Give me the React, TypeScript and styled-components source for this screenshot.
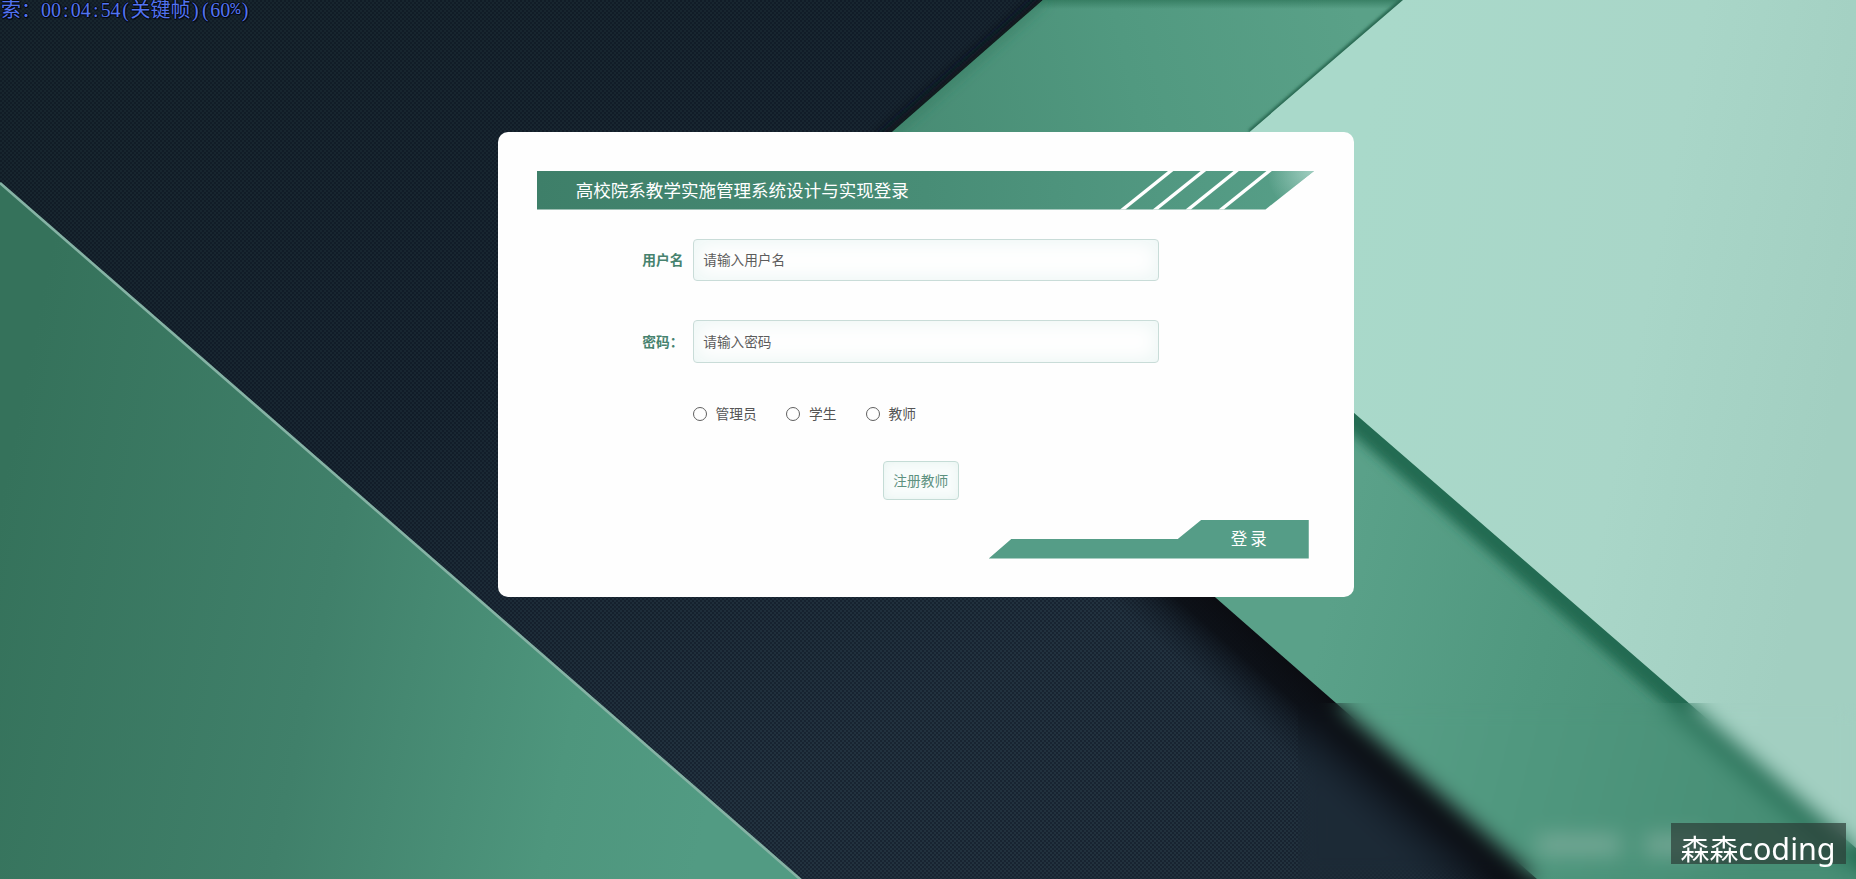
import React from "react";
import styled, { createGlobalStyle } from "styled-components";

const Global = createGlobalStyle`
  * { box-sizing: border-box; }
  body { margin: 0; overflow: hidden; background: #14212b; }
  input, button { font-family: inherit; }
`;

const Page = styled.div`
  position: relative;
  width: 1856px;
  height: 879px;
  overflow: hidden;
  display: flex;
  justify-content: center;
  align-items: flex-start;
  padding: 132px 4px 0 0;
  font-family: "Noto Sans CJK SC", "Liberation Sans", sans-serif;
`;

const Backdrop = styled.svg`
  position: absolute;
  inset: 0;
`;

const Haze = styled.div`
  position: absolute;
  left: 1298px;
  top: 703px;
  right: 0;
  bottom: 0;
  backdrop-filter: blur(10px);
`;

const Status = styled.div`
  position: absolute;
  left: 1px;
  top: 0;
  display: flex;
  height: 20px;
  line-height: 20px;
  font-size: 20px;
  color: #5273f0;
  text-shadow: 1px 0 0 #05080f, -1px 0 0 #05080f, 0 1px 0 #05080f, 0 -1px 0 #05080f, 1px 1px 1px #05080f;
`;

const Cell = styled.span<{ $wide?: boolean; $mono?: boolean }>`
  width: ${(p) => (p.$wide ? 20 : 9.95)}px;
  text-align: center;
  font-size: ${(p) => (p.$mono ? 17 : 20)}px;
  font-family: ${(p) =>
    p.$mono ? '"Liberation Mono", monospace' : '"Liberation Serif", "Noto Sans CJK SC", serif'};
`;

const Card = styled.form`
  position: relative;
  width: 855.5px;
  height: 465px;
  padding: 39px 39px 0;
  border-radius: 10px;
  background: #fefefe;
  display: flex;
  flex-direction: column;
`;

const Banner = styled.header`
  position: relative;
  width: 777px;
  height: 38.5px;
  flex: none;
  display: flex;
  align-items: center;
  padding-left: 38.5px;
`;

const BannerShape = styled.svg`
  position: absolute;
  inset: 0;
`;

const Title = styled.h1`
  position: relative;
  margin: 0;
  font-size: 17.55px;
  line-height: 38px;
  font-weight: 400;
  color: #fff;
  white-space: nowrap;
`;

const Field = styled.label<{ $top: number }>`
  display: flex;
  align-items: center;
  margin: ${(p) => p.$top}px 0 0 105px;
  height: 42.5px;
  flex: none;
`;

const FieldName = styled.span`
  width: 50.5px;
  font-size: 13.75px;
  line-height: 20px;
  padding-bottom: 1px;
  font-weight: 700;
  color: #46826e;
  white-space: nowrap;
`;

const Input = styled.input`
  width: 466.5px;
  height: 42.5px;
  padding: 0 9.5px 1px;
  border: 1px solid #c9dcd8;
  border-radius: 4px;
  outline: none;
  background: #fefefe;
  box-shadow: inset 0 0 20px #e9f5f3;
  font-size: 13.65px;
  color: #555;
  &::placeholder { color: #5c5c5c; opacity: 1; }
`;

const Roles = styled.div`
  display: flex;
  align-items: center;
  margin: 39px 0 0 155.5px;
  height: 24px;
  gap: 29.5px;
`;

const Role = styled.label`
  display: flex;
  align-items: center;
  gap: 8.7px;
  font-size: 13.75px;
  line-height: 24px;
  color: #555;
  white-space: nowrap;
`;

const RoleName = styled.span`
  padding-bottom: 2px;
  line-height: 22px;
`;

const Radio = styled.input`
  appearance: none;
  width: 14px;
  height: 14px;
  margin: 0;
  border: 1.2px solid #606060;
  border-radius: 50%;
`;

const Register = styled.button`
  margin: 35.5px 0 0 345.5px;
  width: 76px;
  height: 39px;
  flex: none;
  padding: 0 0 2px;
  border: 1px solid #c5dcd6;
  border-radius: 4px;
  background: #f8fcfb;
  box-shadow: inset 0 0 10px #e6f3f0;
  font-size: 13.75px;
  color: #5d917f;
  white-space: nowrap;
`;

const Submit = styled.button`
  margin: 19.5px 0 0 451.5px;
  width: 320px;
  height: 39px;
  flex: none;
  padding: 0 39px 3px 0;
  border: 0;
  background: #559d87;
  clip-path: polygon(0 100%, 22.5px 19.5px, 189px 19.5px, 213px 0, 100% 0, 100% 100%);
  text-align: right;
  font-size: 16.5px;
  letter-spacing: 3px;
  color: #fff;
`;

const Watermark = styled.div`
  position: absolute;
  left: 1671px;
  top: 823px;
  width: 175px;
  height: 41px;
  padding-left: 9.5px;
  background: rgba(42, 57, 51, 0.68);
  color: #fff;
  font-size: 28.9px;
  line-height: 49px;
  white-space: nowrap;
`;

const Latin = styled.span`
  font-family: "Noto Sans", sans-serif;
  font-size: 30.5px;
`;

const half = (s: string) =>
  s.split("").map((c, i) => (
    <Cell key={i} $mono={c === "%"}>
      {c}
    </Cell>
  ));
const wide = (s: string) =>
  s.split("").map((c, i) => (
    <Cell key={i} $wide>
      {c}
    </Cell>
  ));

const stripes = [583.5, 616.2, 649, 682];

export default function App() {
  return (
    <Page>
      <Global />
      <Backdrop width="1856" height="879" viewBox="0 0 1856 879">
        <defs>
          <linearGradient id="night" x1="0" y1="0" x2="1" y2="1">
            <stop offset="0" stopColor="#17252d" />
            <stop offset="0.35" stopColor="#182631" />
            <stop offset="0.65" stopColor="#22323f" />
            <stop offset="1" stopColor="#21303b" />
          </linearGradient>
          <linearGradient id="hill" gradientUnits="userSpaceOnUse" x1="0" y1="500" x2="740" y2="650">
            <stop offset="0" stopColor="#35725b" />
            <stop offset="0.45" stopColor="#40806a" />
            <stop offset="0.8" stopColor="#4e967d" />
            <stop offset="1" stopColor="#529b83" />
          </linearGradient>
          <linearGradient id="bandTop" gradientUnits="userSpaceOnUse" x1="900" y1="130" x2="1360" y2="20">
            <stop offset="0" stopColor="#488c74" />
            <stop offset="0.5" stopColor="#519980" />
            <stop offset="1" stopColor="#5aa188" />
          </linearGradient>
          <linearGradient id="bandLow" gradientUnits="userSpaceOnUse" x1="1330" y1="600" x2="1800" y2="720">
            <stop offset="0" stopColor="#5aa189" />
            <stop offset="0.45" stopColor="#50987f" />
            <stop offset="1" stopColor="#478e75" />
          </linearGradient>
          <linearGradient id="mint" gradientUnits="userSpaceOnUse" x1="1350" y1="200" x2="1856" y2="300">
            <stop offset="0" stopColor="#a9d9ca" />
            <stop offset="0.6" stopColor="#a9d6c8" />
            <stop offset="1" stopColor="#a2cfc1" />
          </linearGradient>
          <linearGradient id="ceil" x1="0" y1="0" x2="0" y2="1">
            <stop offset="0" stopColor="#2c7357" stopOpacity="0.7" />
            <stop offset="1" stopColor="#2c7357" stopOpacity="0" />
          </linearGradient>
          <linearGradient id="shade" gradientUnits="userSpaceOnUse" x1="1336" y1="703" x2="1287" y2="759">
            <stop offset="0" stopColor="#0b0d12" />
            <stop offset="0.35" stopColor="#0b0e14" stopOpacity="0.9" />
            <stop offset="0.65" stopColor="#0d131b" stopOpacity="0.42" />
            <stop offset="1" stopColor="#121c26" stopOpacity="0" />
          </linearGradient>
          <pattern id="mesh" width="4" height="4" patternUnits="userSpaceOnUse">
            <rect x="0" y="0" width="2" height="2" fill="#050c18" fillOpacity="0.36" />
            <rect x="2" y="2" width="2" height="2" fill="#050c18" fillOpacity="0.36" />
          </pattern>
          <filter id="soft" filterUnits="userSpaceOnUse" x="700" y="-60" width="1250" height="1010">
            <feGaussianBlur stdDeviation="6" />
          </filter>
          <filter id="fine" filterUnits="userSpaceOnUse" x="700" y="-60" width="1250" height="1010">
            <feGaussianBlur stdDeviation="1.5" />
          </filter>
          <clipPath id="bandClip">
            <path d="M1043 0 L788 223 L1537 879 H1900 V0Z" />
          </clipPath>
        </defs>
        <rect width="1856" height="879" fill="url(#night)" />
        <rect width="1856" height="879" fill="url(#mesh)" />
        <path d="M1100 496 L1560 899 L1460 960 L1000 560Z" fill="url(#shade)" />
        <path d="M1070 -20 L880 145" stroke="#09131a" strokeWidth="16" filter="url(#soft)" />
        <path d="M0 182 L801 879 H0Z" fill="url(#hill)" />
        <path d="M0 183 L801 880" stroke="#86b3a5" strokeWidth="2.6" />
        <g clipPath="url(#bandClip)">
          <rect x="780" width="1076" height="300" fill="url(#bandTop)" />
          <rect x="780" y="300" width="1076" height="579" fill="url(#bandLow)" />
          <rect x="780" width="1076" height="9" fill="url(#ceil)" />
          <path d="M1043 0 L888 136" stroke="#2b755b" strokeWidth="8" strokeOpacity="0.6" filter="url(#soft)" />
          <path d="M1250 328 L1920 907" stroke="#216b51" strokeWidth="27" filter="url(#soft)" />
          <path d="M1403 0 L1250 132" stroke="#28664f" strokeWidth="5" filter="url(#fine)" />
        </g>
        <path d="M1403 0 L1139 227 L1353 412 L1856 848 V0Z" fill="url(#mint)" />
        <g fill="#86b0a1" fillOpacity="0.65">
          <rect x="1537" y="834" width="84" height="22" />
          <rect x="1645" y="834" width="60" height="22" />
        </g>
      </Backdrop>
      <Haze />

      <Card onSubmit={(e) => e.preventDefault()}>
        <Banner>
          <BannerShape width="777" height="38.5" viewBox="0 0 777 38.5">
            <defs>
              <linearGradient id="bar" x1="0" y1="0" x2="1" y2="0">
                <stop offset="0" stopColor="#3e7f69" />
                <stop offset="0.5" stopColor="#488d76" />
                <stop offset="1" stopColor="#579f88" />
              </linearGradient>
              <radialGradient id="shine" gradientUnits="userSpaceOnUse" cx="774" cy="0" r="44">
                <stop offset="0" stopColor="#b5dbd0" stopOpacity="0.75" />
                <stop offset="1" stopColor="#b5dbd0" stopOpacity="0" />
              </radialGradient>
            </defs>
            <path d="M0 0H777L728.5 38.5H0Z" fill="url(#bar)" />
            <path d="M0 0H777L728.5 38.5H0Z" fill="url(#shine)" />
            {stripes.map((x) => (
              <path key={x} d={`M${x + 47.5} 0h5.4l-48 38.5h-5.4z`} fill="#fff" />
            ))}
          </BannerShape>
          <Title>高校院系教学实施管理系统设计与实现登录</Title>
        </Banner>
        <Field $top={29}>
          <FieldName>用户名</FieldName>
          <Input placeholder="请输入用户名" />
        </Field>
        <Field $top={39}>
          <FieldName>密码：</FieldName>
          <Input type="password" placeholder="请输入密码" />
        </Field>
        <Roles>
          {["管理员", "学生", "教师"].map((r) => (
            <Role key={r}>
              <Radio type="radio" name="role" />
              <RoleName>{r}</RoleName>
            </Role>
          ))}
        </Roles>
        <Register type="button">注册教师</Register>
        <Submit type="submit">登录</Submit>
      </Card>

      <Status>
        {wide("索：")}
        {half("00:04:54(")}
        {wide("关键帧")}
        {half(")(60%)")}
      </Status>
      <Watermark>
        森森<Latin>coding</Latin>
      </Watermark>
    </Page>
  );
}
